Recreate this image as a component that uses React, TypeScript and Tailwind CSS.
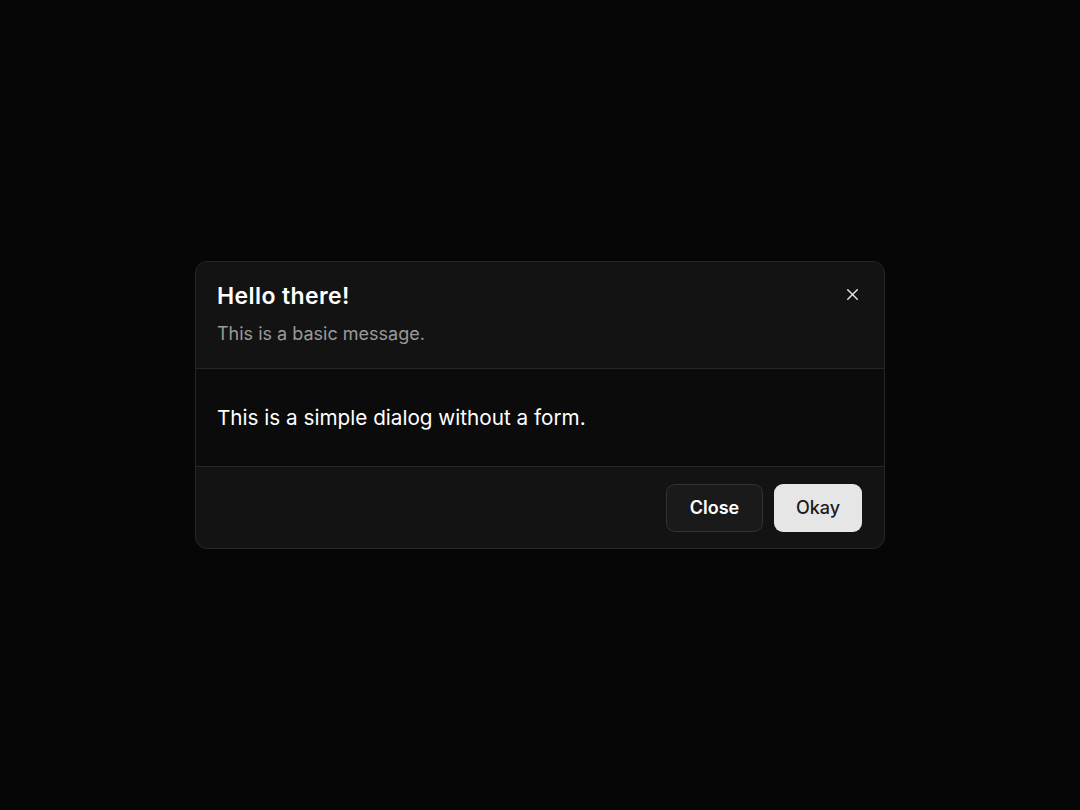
import React from 'react';
import { X } from 'lucide-react';

const App: React.FC = () => {
  return (
    <div
      className="w-[1080px] h-[810px] bg-[#060606] flex items-start justify-center pt-[261px]"
      style={{ fontFamily: 'Inter, "Liberation Sans", sans-serif' }}
    >
      <div className="w-[690px] rounded-[12px] border border-[#262626] bg-[#131313] overflow-hidden">
        {/* Header */}
        <div className="relative h-[106px] px-[21px] pt-[18px]">
          <h2 className="text-[23px] leading-[32px] font-semibold text-white tracking-[0.4px]">Hello there!</h2>
          <p className="mt-[9px] text-[18px] leading-[26px] text-[#9a9a9a]">This is a basic message.</p>
          <button className="absolute right-[22px] top-[23px] text-[#e5e5e5]">
            <X size={19} strokeWidth={1.8} />
          </button>
        </div>
        {/* Body */}
        <div className="h-[99px] border-y border-[#262626] bg-[#0b0b0b] px-[21px] flex items-center">
          <p className="text-[20.7px] leading-[28px] text-white">This is a simple dialog without a form.</p>
        </div>
        {/* Footer */}
        <div className="h-[81px] px-[22px] flex items-center justify-end gap-[11px]">
          <button className="h-[48px] w-[97px] rounded-[9px] border border-[#333] bg-[#1a1a1a] text-[18px] font-semibold text-white">
            Close
          </button>
          <button className="h-[48px] w-[88px] rounded-[9px] bg-[#e6e6e6] text-[18px] font-medium text-[#1a1a1a]">
            Okay
          </button>
        </div>
      </div>
    </div>
  );
};

export default App;
